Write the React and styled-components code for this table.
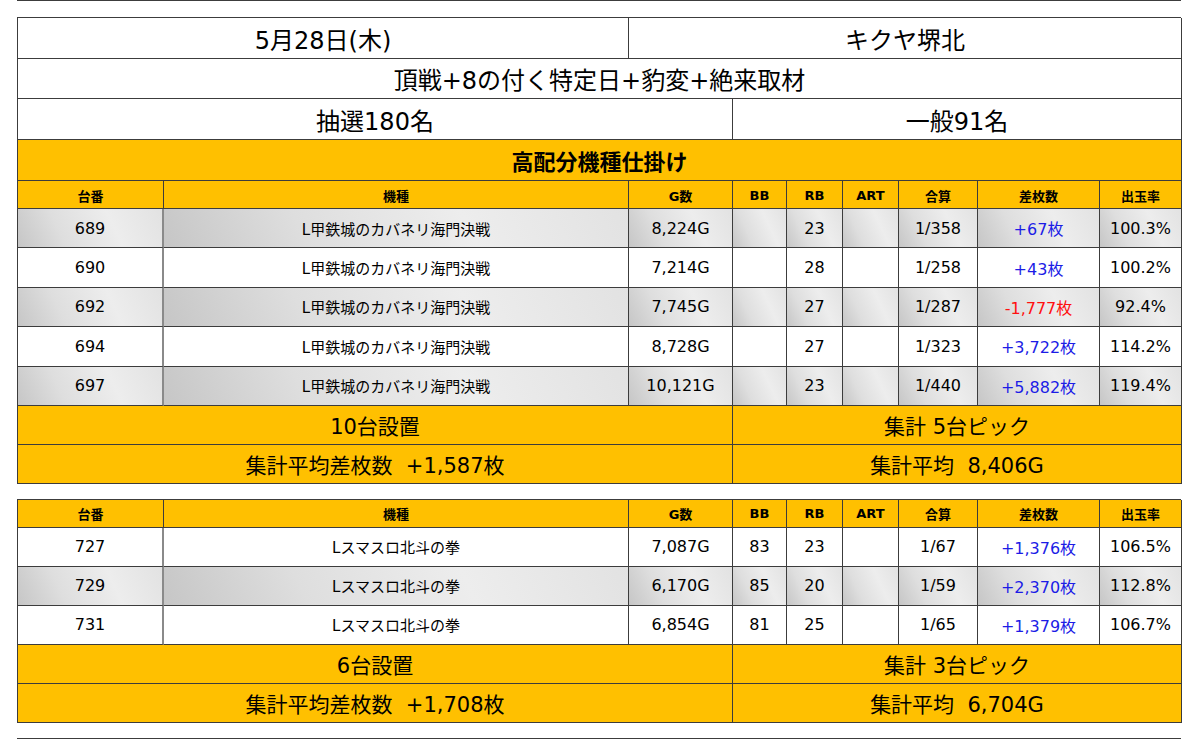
import React from 'react';
import styled, { createGlobalStyle } from 'styled-components';

const GlobalStyles = createGlobalStyle`
  body {
    margin: 0;
    background: #ffffff;
    font-family: "DejaVu Sans", "Noto Sans CJK JP", sans-serif;
    color: #000;
  }
`;

const LINE = '#3c3c3c';
const GOLD = '#ffc000';

const Page = styled.div`
  width: 1164px;
  padding: 0 19px 0 17px;
`;

const Rule = styled.div`
  border-top: 1px solid ${LINE};
  height: 0;
  margin-bottom: ${p => p.$after || 0}px;
`;

const Sheet = styled.div`
  display: grid;
  grid-template-columns: 146px 465px 104px 54px 56px 56px 79px 122px 82px;
  border-top: 1px solid ${LINE};
  border-left: 1px solid ${LINE};
  box-sizing: border-box;
  margin-bottom: ${p => p.$after || 0}px;
`;

const Cell = styled.div`
  grid-column: ${p => p.$span || 'auto'};
  height: ${p => p.$h}px;
  box-sizing: border-box;
  border-right: ${p => (p.$split ? '2px solid #8a8a8a' : `1px solid ${LINE}`)};
  border-bottom: 1px solid ${LINE};
  display: flex;
  align-items: center;
  justify-content: center;
  white-space: pre;
  font-size: ${p => p.$size || 16}px;
  font-weight: ${p => (p.$bold ? 700 : 400)};
  color: ${p => p.$color || '#000'};
  background: ${p =>
    p.$tone === 'gold'
      ? GOLD
      : p.$tone === 'gray'
      ? 'linear-gradient(65deg, #c6c6c6 0%, #dedede 30%, #ededed 65%, #e2e2e2 100%)'
      : '#ffffff'};
`;

const Head = styled(Cell)`
  font-size: 13px;
  font-weight: 700;
  padding-top: 1px;
`;

const heads = ['台番', '機種', 'G数', 'BB', 'RB', 'ART', '合算', '差枚数', '出玉率'];

const BLUE = '#1c1ce6';
const RED = '#ff1010';

const groups = [
  {
    rowH: 39.4,
    grayRows: [0, 2, 4],
    rows: [
      ['689', 'L甲鉄城のカバネリ海門決戦', '8,224G', '', '23', '', '1/358', '+67枚', '100.3%'],
      ['690', 'L甲鉄城のカバネリ海門決戦', '7,214G', '', '28', '', '1/258', '+43枚', '100.2%'],
      ['692', 'L甲鉄城のカバネリ海門決戦', '7,745G', '', '27', '', '1/287', '-1,777枚', '92.4%'],
      ['694', 'L甲鉄城のカバネリ海門決戦', '8,728G', '', '27', '', '1/323', '+3,722枚', '114.2%'],
      ['697', 'L甲鉄城のカバネリ海門決戦', '10,121G', '', '23', '', '1/440', '+5,882枚', '119.4%'],
    ],
    foot: [
      ['10台設置', '集計 5台ピック'],
      ['集計平均差枚数  +1,587枚', '集計平均  8,406G'],
    ],
  },
  {
    rowH: 39,
    grayRows: [1],
    rows: [
      ['727', 'Lスマスロ北斗の拳', '7,087G', '83', '23', '', '1/67', '+1,376枚', '106.5%'],
      ['729', 'Lスマスロ北斗の拳', '6,170G', '85', '20', '', '1/59', '+2,370枚', '112.8%'],
      ['731', 'Lスマスロ北斗の拳', '6,854G', '81', '25', '', '1/65', '+1,379枚', '106.7%'],
    ],
    foot: [
      ['6台設置', '集計 3台ピック'],
      ['集計平均差枚数  +1,708枚', '集計平均  6,704G'],
    ],
  },
];

function DataRows({ group }) {
  return (
    <>
      {heads.map(h => (
        <Head key={h} $h={28} $tone="gold">{h}</Head>
      ))}
      {group.rows.map((r, ri) => {
        const tone = group.grayRows.includes(ri) ? 'gray' : 'white';
        return r.map((v, ci) => (
          <Cell
            key={`${ri}-${ci}`}
            $h={group.rowH}
            $tone={tone}
            $split={ci === 0}
            $size={ci === 1 ? 15 : 16}
            $color={ci === 7 ? (v.startsWith('-') ? RED : BLUE) : undefined}
          >
            {v}
          </Cell>
        ));
      })}
      {group.foot.map((f, fi) => (
        <React.Fragment key={fi}>
          <Cell $span="1 / 4" $h={39} $tone="gold" $size={21}>{f[0]}</Cell>
          <Cell $span="4 / 10" $h={39} $tone="gold" $size={21}>{f[1]}</Cell>
        </React.Fragment>
      ))}
    </>
  );
}

export default function App() {
  return (
    <Page>
      <GlobalStyles />
      <Rule $after={16} />
      <Sheet $after={15}>
        <Cell $span="1 / 3" $h={41} $size={24}>5月28日(木)</Cell>
        <Cell $span="3 / 10" $h={41} $size={24}>キクヤ堺北</Cell>
        <Cell $span="1 / 10" $h={40} $size={24}>頂戦+8の付く特定日+豹変+絶来取材</Cell>
        <Cell $span="1 / 4" $h={41} $size={24}>抽選180名</Cell>
        <Cell $span="4 / 10" $h={41} $size={24}>一般91名</Cell>
        <Cell $span="1 / 10" $h={41} $size={22} $bold $tone="gold">高配分機種仕掛け</Cell>
        <DataRows group={groups[0]} />
      </Sheet>
      <Sheet $after={15}>
        <DataRows group={groups[1]} />
      </Sheet>
      <Rule />
    </Page>
  );
}
